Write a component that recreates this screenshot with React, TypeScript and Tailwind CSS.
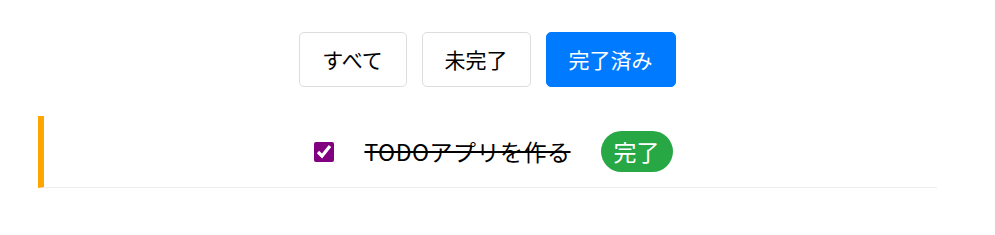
import React from "react";

export default function App() {
  const font = { fontFamily: '"Noto Sans CJK JP", "Noto Sans", sans-serif' };
  return (
    <div className="w-[995px] h-[235px] bg-white" style={font}>
      <div className="flex justify-center gap-[15px] pt-[32px] pr-[21px]">
        <button className="h-[55px] w-[108px] rounded-[5px] border border-[#dddddd] bg-white text-[21px] text-black flex items-center justify-center">
          すべて
        </button>
        <button className="h-[55px] w-[109px] rounded-[5px] border border-[#dddddd] bg-white text-[21px] text-black flex items-center justify-center">
          未完了
        </button>
        <button className="h-[55px] w-[130px] rounded-[5px] border border-[#007bff] bg-[#007bff] text-[21px] text-white flex items-center justify-center">
          完了済み
        </button>
      </div>
      <div className="pl-[38px] pr-[58px] pt-[29px]">
        <div className="flex items-center justify-center gap-[30px] border-l-[6px] border-l-[#ffa500] border-b border-b-[#eeeeee] py-[15px] pl-[6px]">
          <input
            type="checkbox"
            checked
            readOnly
            className="w-[20px] h-[20px] accent-[#800080] m-0"
          />
          <span className="text-[23px] leading-none text-black line-through tracking-[0.5px]">
            TODOアプリを作る
          </span>
          <span className="h-[41px] w-[72px] rounded-full bg-[#28a745] text-white text-[23px] flex items-center justify-center">
            完了
          </span>
        </div>
      </div>
    </div>
  );
}
